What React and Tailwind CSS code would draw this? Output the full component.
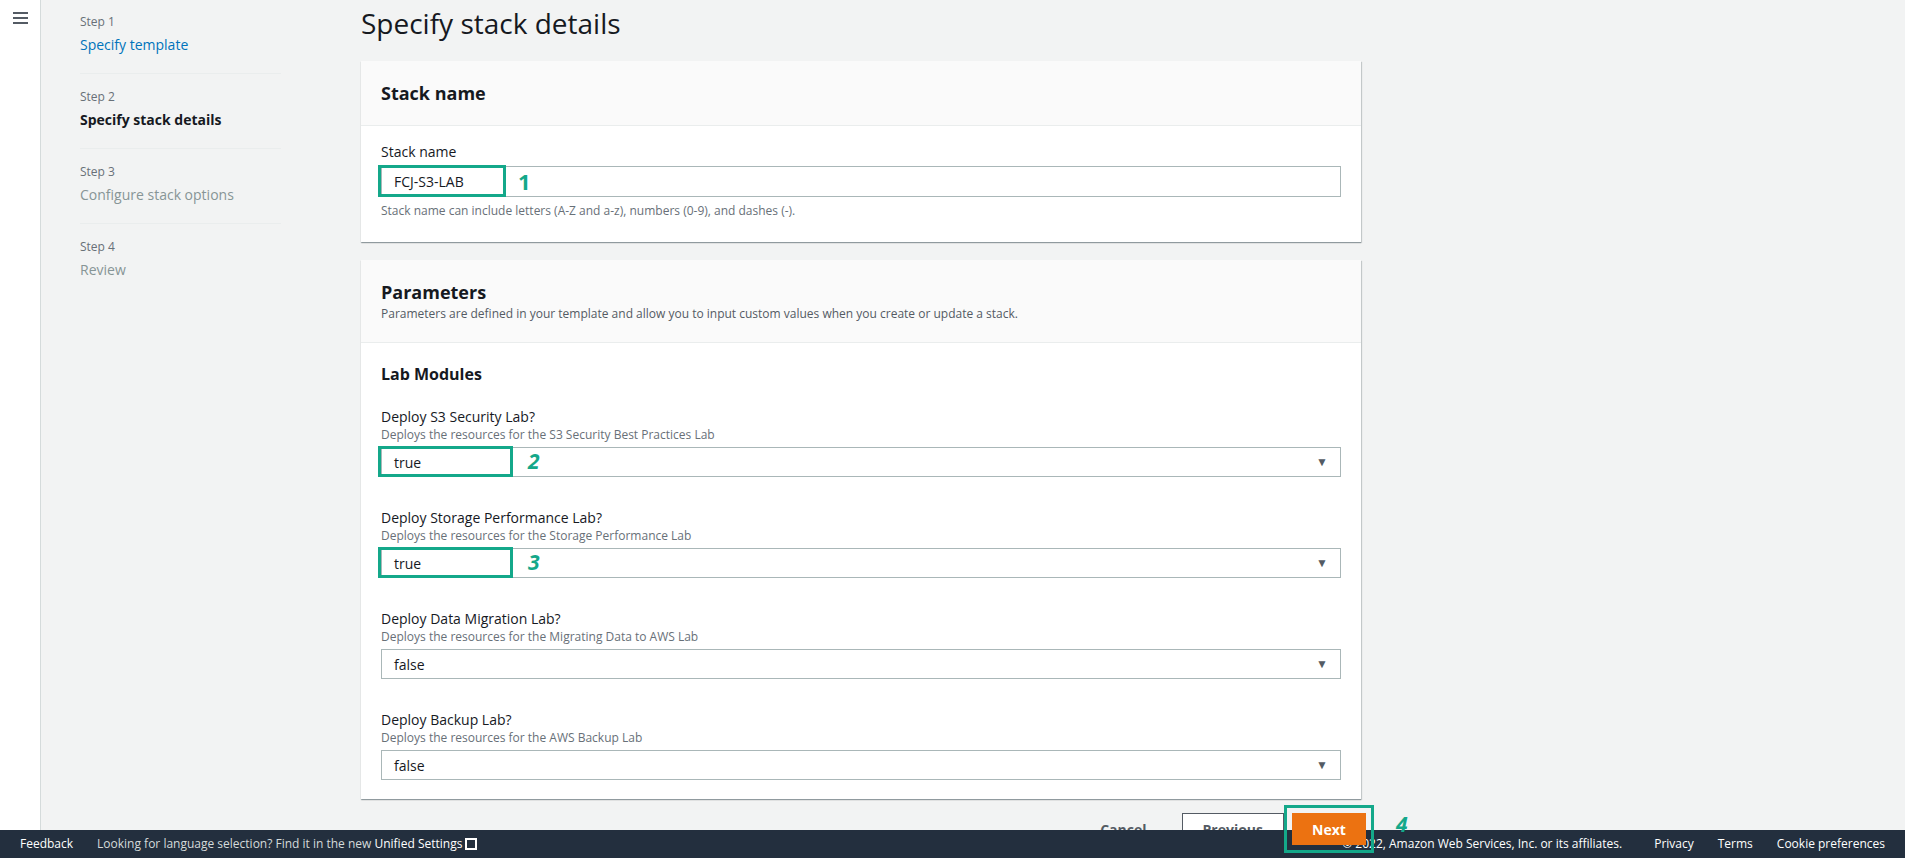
export default function App() {
  const font = { fontFamily: '"Open Sans", "Noto Sans", sans-serif' };
  const steps = [
    ["Step 1", "Specify template", "text-[#0073bb]"],
    ["Step 2", "Specify stack details", "text-[#16191f] font-bold"],
    ["Step 3", "Configure stack options", "text-[#879596]"],
    ["Step 4", "Review", "text-[#879596]"],
  ];
  const fields = [
    ["Deploy S3 Security Lab?", "Deploys the resources for the S3 Security Best Practices Lab", "true", "2"],
    ["Deploy Storage Performance Lab?", "Deploys the resources for the Storage Performance Lab", "true", "3"],
    ["Deploy Data Migration Lab?", "Deploys the resources for the Migrating Data to AWS Lab", "false", null],
    ["Deploy Backup Lab?", "Deploys the resources for the AWS Backup Lab", "false", null],
  ];
  return (
    <div className="w-[1905px] h-[858px] flex flex-col bg-[#f2f3f3] text-[#16191f] overflow-hidden" style={font}>
      <div className="flex flex-1 min-h-0">
        <div className="w-[41px] bg-white border-r border-[#d5dbdb] flex justify-center pt-[12px]">
          <div className="flex flex-col gap-[3px] w-[15px]">
            <div className="h-[2px] bg-[#545b64]" /><div className="h-[2px] bg-[#545b64]" /><div className="h-[2px] bg-[#545b64]" />
          </div>
        </div>
        <div className="w-[240px] pl-[39px] pt-[13px]">
          {steps.map(([s, t, c], i) => (
            <div key={i} className={`pb-[17px] mb-[14px] w-[201px] ${i < 3 ? "border-b border-[#eaeded]" : ""}`}>
              <div className="text-[12px] text-[#687078] leading-[18px]">{s}</div>
              <div className={`text-[14px] leading-[22px] mt-[3px] ${c}`}>{t}</div>
            </div>
          ))}
        </div>
        <div className="ml-[80px] w-[1000px] flex flex-col">
          <h1 className="text-[28px] leading-[34px] mt-[6px] mb-[21px] font-normal">Specify stack details</h1>
          <div className="bg-white shadow-[0_1px_1px_rgba(0,28,36,0.3),1px_1px_1px_rgba(0,28,36,0.15)]">
            <div className="bg-[#fafafa] border-b border-[#eaeded] h-[65px] px-[20px] flex items-center">
              <h2 className="text-[18px] font-bold">Stack name</h2>
            </div>
            <div className="px-[20px] pt-[16px] pb-[22px]">
              <div className="text-[14px] leading-[20px]">Stack name</div>
              <div className="relative mt-[4px] h-[31px] border border-[#aab7b8] flex items-center px-[12px] text-[14px]">
                FCJ-S3-LAB
                <div className="absolute left-[-4px] top-[-2px] w-[128px] h-[32px] border-[3px] border-[#14a88a]" />
                <div className="absolute left-[136px] top-[-2px] text-[#14a88a] font-bold text-[22px] leading-[32px]">1</div>
              </div>
              <div className="text-[12px] text-[#687078] mt-[5px]">Stack name can include letters (A-Z and a-z), numbers (0-9), and dashes (-).</div>
            </div>
          </div>
          <div className="bg-white mt-[18px] shadow-[0_1px_1px_rgba(0,28,36,0.3),1px_1px_1px_rgba(0,28,36,0.15)] pb-[19px]">
            <div className="bg-[#fafafa] border-b border-[#eaeded] h-[83px] px-[20px] pt-[21px]">
              <h2 className="text-[18px] font-bold leading-[22px]">Parameters</h2>
              <div className="text-[12px] text-[#545b64] mt-[2px]">Parameters are defined in your template and allow you to input custom values when you create or update a stack.</div>
            </div>
            <div className="px-[20px] pt-[20px]">
              <h3 className="text-[16px] font-bold leading-[22px] mb-[22px]">Lab Modules</h3>
              {fields.map(([l, d, v, n], i) => (
                <div key={i} className={i ? "mt-[31px]" : ""}>
                  <div className="text-[14px] leading-[20px]">{l}</div>
                  <div className="text-[12px] text-[#687078] leading-[16px]">{d}</div>
                  <div className="relative mt-[4px] h-[30px] border border-[#aab7b8] flex items-center justify-between px-[12px] text-[14px]">
                    <span>{v}</span>
                    <span className="text-[#545b64] text-[12px]">▼</span>
                    {n && <div className="absolute left-[-4px] top-[-2px] w-[135px] h-[31px] border-[3px] border-[#14a88a]" />}
                    {n && <div className="absolute left-[146px] top-[-2px] text-[#14a88a] font-bold italic text-[21px] leading-[31px]">{n}</div>}
                  </div>
                </div>
              ))}
            </div>
          </div>
          <div className="flex justify-end items-center mt-[14px] mr-[-5px] text-[14px] font-bold">
            <span className="text-[#545b64] mr-[35px]">Cancel</span>
            <div className="h-[32px] px-[20px] border border-[#545b64] bg-white text-[#545b64] flex items-center">Previous</div>
            <div className="relative ml-[8px] h-[32px] w-[74px] bg-[#ec7211] text-white flex items-center justify-center">
              Next
              <div className="absolute left-[-8px] top-[-8px] w-[90px] h-[48px] border-[3px] border-[#14a88a]" />
              <div className="absolute left-[104px] top-[-4px] text-[#14a88a] italic text-[21px]">4</div>
            </div>
          </div>
        </div>
      </div>
      <div className="h-[28px] bg-[#232f3e] flex items-center text-[12px] text-white px-[20px] shrink-0">
        <span>Feedback</span>
        <span className="ml-[24px] text-[#d5dbdb]">Looking for language selection? Find it in the new <span className="text-white">Unified Settings</span></span>
        <span className="ml-[3px] inline-block w-[12px] h-[12px] border-2 border-white" />
        <span className="ml-auto">© 2022, Amazon Web Services, Inc. or its affiliates.</span>
        <span className="ml-[32px]">Privacy</span>
        <span className="ml-[24px]">Terms</span>
        <span className="ml-[24px]">Cookie preferences</span>
      </div>
    </div>
  );
}
